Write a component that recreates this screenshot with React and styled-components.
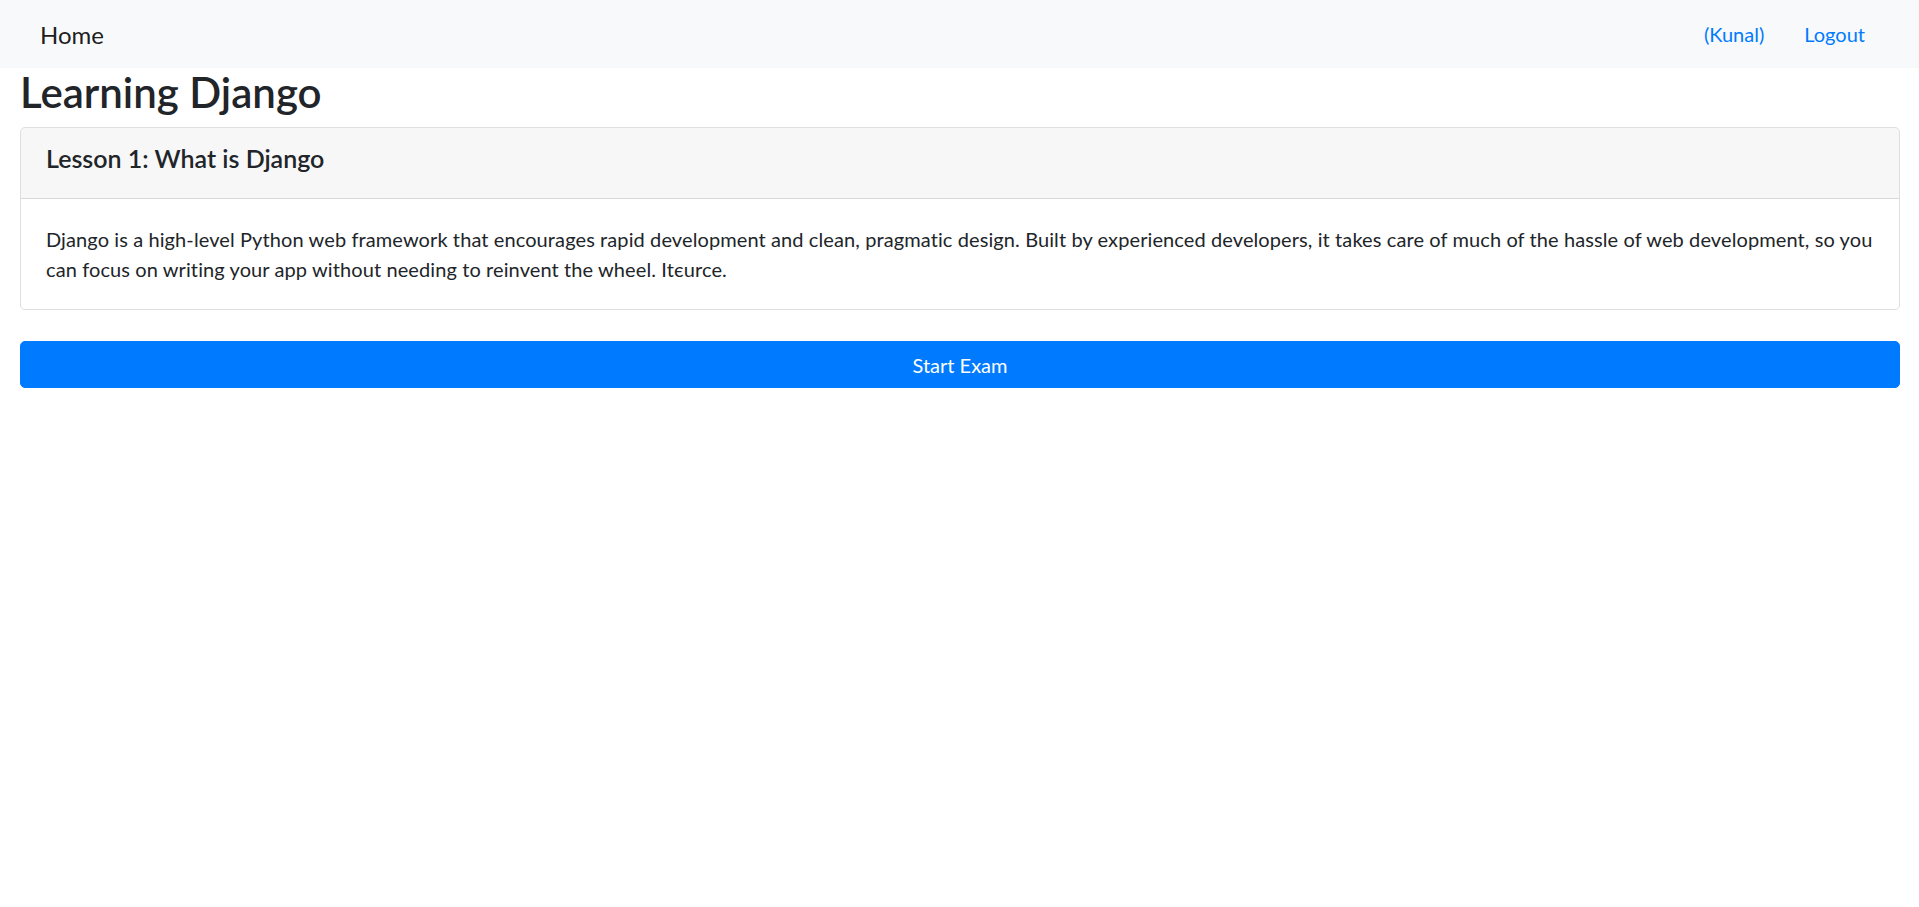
import React from 'react';
import styled, { createGlobalStyle } from 'styled-components';

const GlobalStyle = createGlobalStyle`
    body {
        margin: 0;
        font-family: "Segoe UI", Lato, "Noto Sans", sans-serif;
        color: #212529;
        background: #fff;
    }
`;

const Nav = styled.nav`
    display: flex;
    align-items: center;
    justify-content: space-between;
    height: 68px;
    padding: 0 34px 0 40px;
    background-color: #f8f9fa;
`;

const Brand = styled.a`
    font-size: 24px;
    color: rgba(0, 0, 0, 0.9);
    text-decoration: none;
`;

const NavLinks = styled.ul`
    display: flex;
    align-items: center;
    margin: 0;
    padding: 0;
    list-style: none;
`;

const NavLink = styled.a`
    display: block;
    padding: 0 20px;
    font-size: 20px;
    color: #007bff;
    text-decoration: none;
`;

const Container = styled.main`
    padding: 0 19px 0 20px;
`;

const Title = styled.h2`
    margin: 0 0 10px;
    font-size: 42px;
    font-weight: 600;
    line-height: 49px;
`;

const Card = styled.section`
    border: 1px solid rgba(0, 0, 0, 0.125);
    border-radius: 5px;
    overflow: hidden;
`;

const CardHeader = styled.header`
    padding: 15px 25px;
    background-color: rgba(0, 0, 0, 0.03);
    border-bottom: 1px solid rgba(0, 0, 0, 0.125);
`;

const CardTitle = styled.h5`
    margin: 0 0 10px;
    font-size: 25px;
    font-weight: 600;
    line-height: 30px;
`;

const CardBody = styled.div`
    padding: 25px;
`;

const CardText = styled.p`
    margin: 0;
    font-size: 20px;
    line-height: 30px;
    letter-spacing: 0.1px;
`;

const Button = styled.button`
    display: block;
    width: 100%;
    margin-top: 31px;
    padding: 7.5px 15px;
    font-family: inherit;
    font-size: 20px;
    line-height: 30px;
    color: #fff;
    background-color: #007bff;
    border: 1px solid #007bff;
    border-radius: 5px;
    cursor: pointer;
`;

export default function App() {
    return (
        <>
            <GlobalStyle />
            <Nav>
                <Brand href="#">Home</Brand>
                <NavLinks>
                    <li><NavLink href="#">(Kunal)</NavLink></li>
                    <li><NavLink href="#">Logout</NavLink></li>
                </NavLinks>
            </Nav>
            <Container>
                <Title>Learning Django</Title>
                <Card>
                    <CardHeader>
                        <CardTitle>Lesson 1: What is Django</CardTitle>
                    </CardHeader>
                    <CardBody>
                        <CardText>
                            Django is a high-level Python web framework that encourages rapid development and clean, pragmatic design. Built by experienced developers, it takes care of much of the hassle of web development, so you can focus on writing your app without needing to reinvent the wheel. Itєurce.
                        </CardText>
                    </CardBody>
                </Card>
                <Button>Start Exam</Button>
            </Container>
        </>
    );
}
